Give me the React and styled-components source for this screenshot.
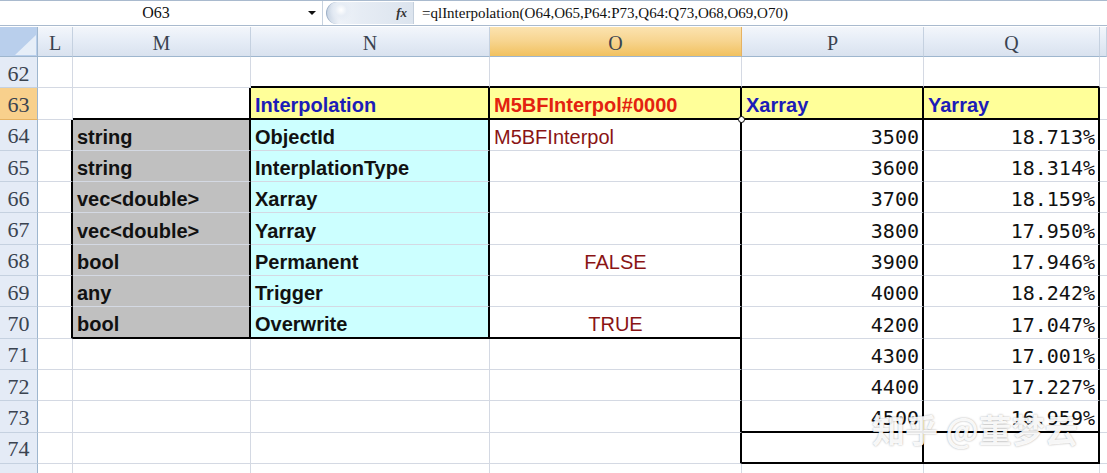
import styled, { createGlobalStyle } from "styled-components";

const GlobalStyle = createGlobalStyle`
  html, body {
    margin: 0;
    padding: 0;
    background: #fff;
  }
  body {
    width: 1107px;
    height: 473px;
    overflow: hidden;
  }
`;

const COLS = "38px 35px 178px 239px 252px 182px 176px 7px";
const GRID = "#d4d9e3";
const THICK = "2px solid #000";

const Window = styled.div`
  position: relative;
  width: 1107px;
  height: 473px;
  overflow: hidden;
  background: #fff;
`;

const FormulaBar = styled.div`
  display: flex;
  align-items: center;
  height: 24px;
  border-top: 1px solid #a9bace;
  border-bottom: 1px solid #a9bace;
  background: #fff;
  font-family: "Liberation Serif", serif;
  color: #111;
`;

const NameBox = styled.div`
  display: flex;
  align-items: center;
  width: 322px;
  height: 100%;
  border-right: 1px solid #c7d2df;
  font-size: 16px;
`;

const NameLabel = styled.span`
  flex: 1;
  text-align: center;
  padding-left: 4px;
`;

const DropArrow = styled.span`
  width: 0;
  height: 0;
  margin-right: 6px;
  border-left: 4px solid transparent;
  border-right: 4px solid transparent;
  border-top: 4px solid #111;
`;

const Grip = styled.div`
  display: flex;
  align-items: center;
  justify-content: flex-end;
  width: 88px;
  height: 22px;
  margin-left: 3px;
  padding-right: 6px;
  box-sizing: border-box;
  border-radius: 12px 0 0 12px;
  border-left: 1px solid #9fb1c8;
  background: radial-gradient(circle at 14px 8px, #ffffff 0, #e7edf5 6px, transparent 12px),
    linear-gradient(90deg, #c9d5e4 0%, #eef2f8 14%, #e6ecf4 40%, #dce4ee 100%);
  border-right: 1px solid #c4cfdc;
`;

const Fx = styled.span`
  font-style: italic;
  font-weight: bold;
  font-size: 13px;
  color: #333;
`;

const FormulaText = styled.div`
  padding-left: 8px;
  font-size: 15px;
  white-space: nowrap;
`;

const Sheet = styled.div`
  display: grid;
  grid-template-columns: ${COLS};
  grid-template-rows: 30px;
  grid-auto-rows: 31.3px;
  margin-top: 1px;
`;

const Corner = styled.div`
  background: #b9cfec;
  border-right: 1px solid #9eb6ce;
  border-bottom: 1px solid #9eb6ce;
  display: flex;
  align-items: flex-end;
  justify-content: flex-end;
`;

const ColHead = styled.div`
  display: flex;
  align-items: center;
  justify-content: center;
  padding-top: 4px;
  box-sizing: border-box;
  font-family: "Liberation Serif", serif;
  font-size: 20px;
  color: #3a4350;
  background: ${(p) =>
    p.$active
      ? "linear-gradient(180deg, #fbe3b0 0%, #f7d48e 50%, #f1c15f 100%)"
      : "linear-gradient(180deg, #f3f6fb 0%, #e5ecf6 50%, #d9e2ef 100%)"};
  border-right: 1px solid ${(p) => (p.$active ? "#e6b262" : "#c5d1e0")};
  border-bottom: 1px solid #9eb6ce;
`;

const RowHead = styled.div`
  display: flex;
  align-items: center;
  justify-content: center;
  padding-top: 3px;
  box-sizing: border-box;
  overflow: hidden;
  font-family: "Liberation Serif", serif;
  font-size: 22px;
  color: #3a4350;
  background: ${(p) => (p.$active ? "#f8d08c" : "#e4ebf6")};
  border-right: 1px solid #9eb6ce;
  border-bottom: 1px solid ${(p) => (p.$active ? "#e6b262" : "#c5d1e0")};
`;

const FILLS = {
  gray: "#c0c0c0",
  cyan: "#ccffff",
  yellow: "#ffff99",
};

const INK = {
  black: "#111",
  blue: "#1c1cb8",
  red: "#e3220f",
  maroon: "#8a1414",
};

const Cell = styled.div`
  position: relative;
  box-sizing: border-box;
  display: flex;
  align-items: flex-end;
  justify-content: ${(p) => p.$align || "flex-start"};
  padding: 0 3px 1px 4px;
  overflow: visible;
  white-space: nowrap;
  background: ${(p) => (p.$fill ? FILLS[p.$fill] : "#fff")};
  border-right: ${(p) => (p.$tr ? THICK : `1px solid ${GRID}`)};
  border-bottom: ${(p) => (p.$tb ? THICK : `1px solid ${GRID}`)};
  color: ${(p) => INK[p.$ink || "black"]};
  font-family: ${(p) =>
    p.$mono ? '"DejaVu Sans Mono", "Liberation Mono", monospace' : '"Liberation Sans", Arial, sans-serif'};
  font-size: 20px;
  font-weight: ${(p) => (p.$bold ? "bold" : "normal")};
  line-height: 23px;
`;

const Handle = styled.span`
  position: absolute;
  right: -5px;
  bottom: -5px;
  width: 5px;
  height: 5px;
  border: 1px solid #000;
  border-radius: 50%;
  background: #fff;
  z-index: 2;
`;

const Watermark = styled.div`
  position: absolute;
  left: 872px;
  top: 405px;
  font-family: "Noto Sans CJK SC", sans-serif;
  font-size: 33px;
  font-weight: bold;
  color: rgba(255, 255, 255, 0.92);
  text-shadow: 0 0 2px rgba(0, 0, 0, 0.35);
  white-space: nowrap;
`;

const LETTERS = ["L", "M", "N", "O", "P", "Q", "R"];

const types = {
  64: "string",
  65: "string",
  66: "vec<double>",
  67: "vec<double>",
  68: "bool",
  69: "any",
  70: "bool",
};

const fields = {
  63: "Interpolation",
  64: "ObjectId",
  65: "InterplationType",
  66: "Xarray",
  67: "Yarray",
  68: "Permanent",
  69: "Trigger",
  70: "Overwrite",
};

const values = {
  64: { text: "M5BFInterpol" },
  68: { text: "FALSE", align: "center" },
  70: { text: "TRUE", align: "center" },
};

const xs = [3500, 3600, 3700, 3800, 3900, 4000, 4200, 4300, 4400, 4500];
const ys = ["18.713%", "18.314%", "18.159%", "17.950%", "17.946%", "18.242%", "17.047%", "17.001%", "17.227%", "16.959%"];

const inRange = (r, a, b) => r >= a && r <= b;

// borders and contents of one sheet cell
function cellSpec(r, c) {
  const s = { tr: false, tb: false };

  if (c === "L") s.tr = inRange(r, 64, 70);

  if (c === "M") {
    s.tr = inRange(r, 63, 70);
    s.tb = r === 63 || r === 70;
    if (types[r]) {
      s.fill = "gray";
      s.bold = true;
      s.text = types[r];
    }
  }

  if (c === "N") {
    s.tr = inRange(r, 63, 70);
    s.tb = r === 62 || r === 63 || r === 70;
    if (r === 63) {
      s.fill = "yellow";
      s.ink = "blue";
    } else if (inRange(r, 64, 70)) s.fill = "cyan";
    if (fields[r]) {
      s.text = fields[r];
      s.bold = true;
    }
  }

  if (c === "O") {
    s.tr = inRange(r, 63, 74);
    s.tb = r === 62 || r === 63 || r === 70;
    if (r === 63) {
      s.fill = "yellow";
      s.ink = "red";
      s.bold = true;
      s.text = "M5BFInterpol#0000";
      s.selected = true;
    } else if (values[r]) {
      s.ink = "maroon";
      s.text = values[r].text;
      s.align = values[r].align;
    }
  }

  if (c === "P" || c === "Q") {
    s.tr = inRange(r, 63, 74);
    s.tb = r === 62 || r === 63 || r === 73 || r === 74;
    if (r === 63) {
      s.fill = "yellow";
      s.ink = "blue";
      s.bold = true;
      s.text = c === "P" ? "Xarray" : "Yarray";
    } else if (inRange(r, 64, 73)) {
      s.mono = true;
      s.align = "flex-end";
      s.text = c === "P" ? String(xs[r - 64]) : ys[r - 64];
    }
  }

  return s;
}

const rowNumbers = Array.from({ length: 14 }, (_, i) => 62 + i);

function App() {
  return (
    <Window>
      <GlobalStyle />
      <FormulaBar>
        <NameBox>
          <NameLabel>O63</NameLabel>
          <DropArrow />
        </NameBox>
        <Grip>
          <Fx>fx</Fx>
        </Grip>
        <FormulaText>=qlInterpolation(O64,O65,P64:P73,Q64:Q73,O68,O69,O70)</FormulaText>
      </FormulaBar>

      <Sheet>
        <Corner>
          <svg width="26" height="24" viewBox="0 0 26 24">
            <polygon points="25,3 25,23 4,23" fill="#e6eef8" />
          </svg>
        </Corner>
        {LETTERS.map((l) => (
          <ColHead key={l} $active={l === "O"}>
            {l === "R" ? "" : l}
          </ColHead>
        ))}

        {rowNumbers.map((r) => [
          <RowHead key={`h${r}`} $active={r === 63}>
            {r < 75 ? r : ""}
          </RowHead>,
          ...LETTERS.map((c) => {
            const s = cellSpec(r, c);
            return (
              <Cell
                key={`${c}${r}`}
                $tr={s.tr}
                $tb={s.tb}
                $fill={s.fill}
                $ink={s.ink}
                $bold={s.bold}
                $mono={s.mono}
                $align={s.align}
              >
                {s.text}
                {s.selected && <Handle />}
              </Cell>
            );
          }),
        ])}
      </Sheet>

      <Watermark>知乎 @董梦云</Watermark>
    </Window>
  );
}

export default App;
